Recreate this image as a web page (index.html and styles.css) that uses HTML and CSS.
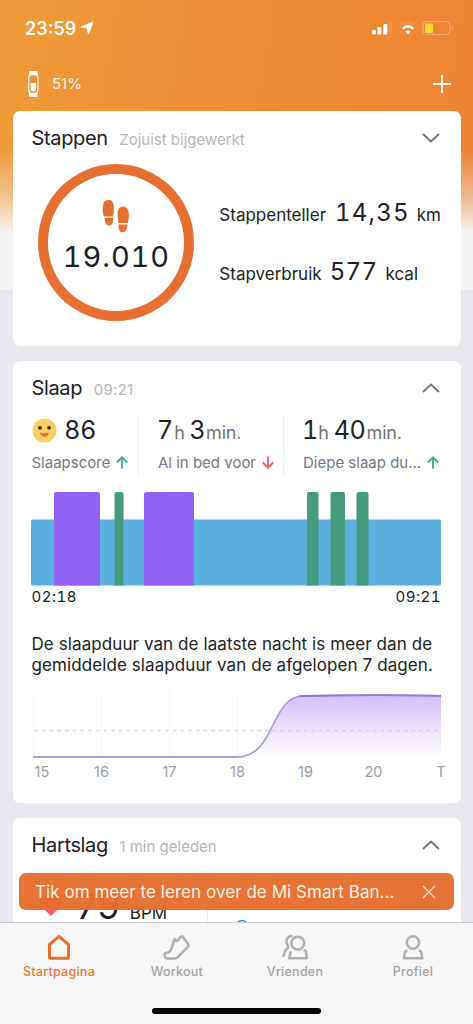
FILE: index.html
```html
<!DOCTYPE html>
<html lang="nl">
<head>
<meta charset="utf-8">
<meta name="viewport" content="width=device-width, initial-scale=1">
<title>Startpagina</title>
<link rel="stylesheet" href="styles.css">
</head>
<body>
<div class="screen">
  <header class="status">
    <span class="time">23:59</span>
    <svg class="loc" width="14" height="14" viewBox="0 0 14 14"><path d="M13.200.8.800 6l6.200 1 1.400 6.200z" fill="#fff" stroke="#fff" stroke-width=".8" stroke-linejoin="round"/></svg>
    <svg class="signals" width="84" height="16" viewBox="0 0 84 16">
      <g fill="#fff"><rect x="1" y="10" width="4" height="4.500" rx="1.200"/><rect x="6.500" y="7" width="4" height="7.500" rx="1"/><rect x="12.300" y="4" width="4" height="10.500" rx="1"/></g>
      <rect x="17.800" y="2" width="3.500" height="12.500" rx="1" fill="#fff" opacity=".12"/>
      <g fill="none" stroke="#fff"><path d="M29.500 4.700q7.500-5 15 0" stroke-width="2" opacity=".15"/><path d="M31.500 8.700q5.500-4.600 11 0" stroke-width="2.600"/></g>
      <path d="M34.300 11.500q2.700-2.200 5.400 0L37 14.500z" fill="#fff"/>
      <rect x="52" y="1.500" width="27" height="13" rx="3.500" fill="none" stroke="#ffc09a" opacity=".65"/>
      <path d="M81 6q2.200 2 0 4z" fill="#ffc09a"/><rect x="54" y="3.500" width="8" height="9.500" rx="1" fill="#fbd83c"/>
    </svg>
  </header>
  <div class="device">
    <svg width="13" height="26" viewBox="0 0 13 26"><path d="M2 0h8.500v3.500l1 3v13l-1 3V26H2v-3.500l-1-3v-13l1-3z" fill="#fff"/><rect x="2.200" y="4" width="8.200" height="18" rx="4.100" fill="#ed9137"/><path d="M3.600 12h5.400v5.500q0 3-2.700 3t-2.700-3z" fill="#fff"/></svg>
    <span class="pct">51%</span>
    <svg class="plus" width="18" height="18" viewBox="0 0 18 18"><path d="M9 0v18M0 9h18" stroke="#fff" stroke-width="1.800"/></svg>
  </div>
  <main class="cards">
    <section class="card steps">
      <div class="head"><h2>Stappen</h2><span class="sub">Zojuist bijgewerkt</span><svg class="chev" width="18" height="10" viewBox="0 0 18 10"><path d="m1 1 8 7.500L17 1"/></svg></div>
      <div class="steps-body">
        <div class="ring">
          <svg width="28" height="34" viewBox="0 0 28 34" fill="#e67032"><path d="M1.700 17.400C.5 12.500 0 7.500 2 3.600 3.600.2 8.500-.3 10.600 3c2 3.500 1.400 9 .6 14.400zM2.500 18.800h8.700c.2 3.300-.4 7.200-3.600 7.800-3.700.4-4.700-3.700-5.100-7.800z"/><path d="M16.600 24c-1-5.500-1.800-10.700.2-14.200 2-3.300 7-3 8.800.2 2 4 1.500 9 .3 14zM16.500 25.400h8.900c-.3 4-1.500 8.200-5.200 7.900-3.200-.3-3.900-4.500-3.700-7.900z"/></svg>
          <span class="count">19.010</span>
        </div>
        <div class="facts">
          <p><span>Stappenteller</span><b class="dist">14,35</b><span>km</span></p>
          <p><span>Stapverbruik</span><b class="kcal">577</b><span>kcal</span></p>
        </div>
      </div>
    </section>
    <section class="card sleep">
      <div class="head"><h2>Slaap</h2><span class="sub stamp">09:21</span><svg class="chev" width="18" height="10" viewBox="0 0 18 10"><path d="m1 9 8-7.500L17 9"/></svg></div>
      <div class="metrics">
        <div class="metric">
          <div class="value"><svg class="face" width="25" height="25" viewBox="0 0 25 25"><circle cx="12.500" cy="12.500" r="12" fill="#f8cf62"/><circle cx="8" cy="9.800" r="1.900" fill="#402b1b"/><circle cx="17" cy="9.800" r="1.900" fill="#402b1b"/><path d="M8 14.700q4.500 1.300 9 0-.7 3.700-4.500 3.700T8 14.700z" fill="#ed604b"/></svg><b class="score">86</b></div>
          <div class="label"><span>Slaapscore</span><svg class="up" width="12" height="13" viewBox="0 0 12 13"><path d="M6 12.500V1.500M.8 6.500 6 1.300l5.200 5.200"/></svg></div>
        </div>
        <div class="metric">
          <div class="value"><b>7</b><i>h</i><b class="next">3</b><i class="min">min.</i></div>
          <div class="label"><span>Al in bed voor</span><svg class="down" width="12" height="13" viewBox="0 0 12 13"><path d="M6 .5v11M.8 6.500 6 11.700l5.200-5.200"/></svg></div>
        </div>
        <div class="metric">
          <div class="value"><b class="one">1</b><i>h</i><b class="next">40</b><i class="min">min.</i></div>
          <div class="label"><span>Diepe slaap du...</span><svg class="up" width="12" height="13" viewBox="0 0 12 13"><path d="M6 12.500V1.500M.8 6.500 6 1.300l5.200 5.200"/></svg></div>
        </div>
      </div>
      <svg class="phases" width="410" height="94" viewBox="0 0 410 94">
        <rect y="27.500" width="410" height="66" rx="1.500" fill="#5bafdf"/>
        <g fill="#8f62f3"><path d="M23 93.500V2q0-2 2-2h42q2 0 2 2v91.500zM113 93.500V2q0-2 2-2h46q2 0 2 2v91.500z"/></g>
        <path d="M83.500 93.500V2q0-2 2-2h5q2 0 2 2v91.500zM276 93.500V2q0-2 2-2h7.500q2 0 2 2v91.500zM299.500 93.500V2q0-2 2-2h10.500q2 0 2 2v91.500zM325.500 93.500V2q0-2 2-2h8q2 0 2 2v91.500z" fill="#459b7e"/>
      </svg>
      <div class="range"><span>02:18</span><span>09:21</span></div>
      <p class="note">De slaapduur van de laatste nacht is meer dan de<br>gemiddelde slaapduur van de afgelopen 7 dagen.</p>
      <svg class="trend" width="410" height="70" viewBox="0 0 410 70">
        <defs><linearGradient id="fade" x1="0" y1="0" x2="0" y2="1"><stop offset="0" stop-color="#cfb7fb"/><stop offset="1" stop-color="#fff"/></linearGradient></defs>
        <path d="M3 0v66M70.500 0v66M138.500 0v66M206.500 0v66M274 0v66M342 0v66M409.500 0v66" stroke="#f7f7f9"/>
        <path d="M206 67C245 67 239 6.500 272 6q70-1.500 138-.2V67z" fill="url(#fade)" opacity=".9"/>
        <path d="M3 40.700h407" stroke="#cac8d0" stroke-dasharray="4 3.700"/>
        <path d="M2 67h204C245 67 239 6.500 272 6q70-1.500 138-.2" fill="none" stroke="#ae9be8" stroke-width="1.800"/>
        <path d="M268 6.200 272 6q70-1.500 138-.2" fill="none" stroke="#9479db" stroke-width="1.800"/>
      </svg>
      <div class="axis"><span>15</span><span>16</span><span>17</span><span>18</span><span>19</span><span>20</span><span>T</span></div>
    </section>
    <section class="card heart">
      <div class="head"><h2>Hartslag</h2><span class="sub">1 min geleden</span><svg class="chev" width="18" height="10" viewBox="0 0 18 10"><path d="m1 9 8-7.500L17 9"/></svg></div>
      <div class="pulse">
        <svg width="24" height="22" viewBox="0 0 24 22"><path d="M12 21 2 11Q-2 2 5 0q5-1 7 4 2-5 7-4 7 2 3 11z" fill="#ed5d6f"/></svg>
        <b>79</b><span>BPM</span>
        <div class="rest"><svg width="14" height="14" viewBox="0 0 14 14"><circle cx="7" cy="7" r="5.500" fill="none" stroke="#438bc4" stroke-width="1.500"/></svg><span>rust</span></div>
      </div>
    </section>
  </main>
  <div class="toast"><span>Tik om meer te leren over de Mi Smart Ban...</span><svg width="14" height="14" viewBox="0 0 14 14"><path d="m1 1 12 12M13 1 1 13" stroke="#ffe3d2" stroke-width="1.200"/></svg></div>
  <nav class="tabs">
    <div class="tab active"><svg width="28" height="28" viewBox="0 0 28 28"><path d="M4.500 11.500 14 3.300l9.500 8.200v12.700q0 1-1 1h-17q-1 0-1-1z"/></svg><span>Startpagina</span></div>
    <div class="tab"><svg width="28" height="28" viewBox="0 0 28 28"><path d="M11.500 6 14 8q2-.6 2.300-2.800l2.200-1.800q.7-.5 1.300.2l5.700 8.200q.5.800-.1 1.500L14.600 24.400q-1 1-2.500 1H4q-2.500-.3-2.500-3.300 0-1.800 1.400-2 4.400-.6 5.800-5.300z"/></svg><span>Workout</span></div>
    <div class="tab"><svg width="28" height="28" viewBox="0 0 28 28"><circle cx="16.800" cy="10.200" r="6.400"/><path d="M11.500 3Q8 2.700 6.200 5.500 4.500 9 6.500 12l.8 2.500q-4.300 3.500-4.800 9.500M9.800 18.200 8.200 25.200h17.600l-1-7-2.300-1.500"/></svg><span>Vrienden</span></div>
    <div class="tab"><svg width="28" height="28" viewBox="0 0 28 28"><circle cx="14" cy="9.500" r="6.200"/><path d="m8.200 17-2.300 2-.9 6.200H23.200l-1-6.200-2.300-2"/></svg><span>Profiel</span></div>
    <div class="home"></div>
  </nav>
</div>
</body>
</html>
```
FILE: styles.css
```css
* { box-sizing: border-box; }
body { margin: 0; font-family: Inter, "Noto Sans", sans-serif; color: #202124; }
h2, p { margin: 0; font-weight: 400; }
b, i { font-weight: 400; font-style: normal; }
svg { display: block; flex: none; }
.screen {
  position: relative; width: 473px; height: 1024px; overflow: hidden;
  display: flex; flex-direction: column; white-space: nowrap;
  background:
    linear-gradient(180deg, rgba(245,245,247,0) 150px, rgba(245,245,247,.45) 195px, #f5f5f7 235px, #f5f5f7 290px, #e7e8eb 290px),
    linear-gradient(100deg, #ef9b38 0, #ed8f37 35%, #ed8735 65%, #eb7d32 100%);
}
.status { height: 56px; padding: 0 18px 0 25px; display: flex; align-items: center; color: #fff; }
.time { font-size: 18px; font-weight: 600; }
.loc { margin-left: 4px; }
.signals { margin-left: auto; }
.device { height: 55px; padding: 0 22px 0 27px; display: flex; align-items: center; color: #fff6eb; }
.pct { margin-left: 12px; font-size: 15px; }
.plus { margin-left: auto; }
.cards { padding: 0 12.500px; display: flex; flex-direction: column; gap: 15px; }
.card { background: #fff; border-radius: 7px; padding: 0 19.500px 0 19px; flex: none; }
.steps { height: 235px; }
.sleep { height: 442px; }
.heart { height: 150px; }
.head { height: 53px; display: flex; align-items: baseline; line-height: 54px; }
.head h2 { font-size: 20px; letter-spacing: -.35px; }
.sub { margin-left: 11.500px; font-size: 15px; color: #b7b7b9; }
.stamp { letter-spacing: .3px; }
.chev { margin-left: auto; margin-top: 1px; margin-right: 1px; align-self: center; }
.chev path { fill: none; stroke: #717173; stroke-width: 1.800; }
.steps-body { display: flex; padding-left: 6px; }
.ring { width: 157px; height: 157px; border: 10px solid #e67032; border-radius: 50%; display: flex; flex-direction: column; align-items: center; padding-top: 25px; }
.ring svg { margin-left: 1px; }
.count { font-size: 29px; line-height: 40px; margin-top: 4px; padding-left: 1px; font-feature-settings: "tnum"; letter-spacing: .9px; }
.facts { margin-left: 25px; padding-top: 31px; }
.facts p { height: 59px; line-height: 36px; font-size: 17px; display: flex; align-items: baseline; }
.facts b { font-size: 24px; font-feature-settings: "tnum"; }
.dist { margin: 0 7px 0 9px; letter-spacing: 1.200px; }
.kcal { margin: 0 8px; letter-spacing: .4px; }
.metrics { height: 62px; display: flex; }
.metric { width: 145px; padding-left: 19px; border-left: 1px solid #efeff1; }
.metric:first-child { width: 106.500px; padding: 0; border: 0; }
.metric:last-child { flex: 1; }
.value { height: 33px; line-height: 33px; display: flex; align-items: baseline; }
.value b { font-size: 25px; }
.value .score { letter-spacing: .6px; }
.value .one { font-feature-settings: "tnum"; margin-left: -1px; margin-right: -2px; }
.value i { font-size: 18px; color: #727275; margin-left: 2px; letter-spacing: -.2px; }
.value .next { margin-left: 5px; }
.value .min { margin-left: 1px; }
.face { align-self: center; margin-right: 8px; }
.label { height: 30px; display: flex; align-items: center; font-size: 15px; color: #77777a; }
.label svg { margin-left: 6px; fill: none; stroke-width: 1.800; }
.up { stroke: #41a883; }
.down { stroke: #e85c6b; }
.phases { margin-top: 16px; margin-left: -.5px; }
.range { height: 22px; line-height: 22px; display: flex; justify-content: space-between; font-size: 15px; font-feature-settings: "tnum"; letter-spacing: .5px; }
.note { margin-top: 26px; font-size: 17px; line-height: 21px; letter-spacing: .09px; }
.trend { margin-top: 14px; margin-left: -.5px; }
.axis { width: 416px; margin-left: 3px; height: 24px; line-height: 24px; display: grid; grid-template-columns: 33px repeat(5, 68px) 38px; text-align: center; font-size: 14.500px; color: #9c9c9f; }
.axis span:first-child { text-align: left; }
.axis span:last-child { text-align: right; }
.pulse { display: flex; align-items: baseline; height: 60px; line-height: 70px; }
.pulse > svg { margin-left: 7px; align-self: flex-start; margin-top: 24px; }
.pulse b { font-size: 36px; margin-left: 14px; letter-spacing: 1px; }
.pulse > span { font-size: 17px; margin-left: 9px; }
.rest { margin-left: 40px; padding: 48px 0 0 27px; border-left: 1px solid #ececef; align-self: flex-start; display: flex; gap: 3px; line-height: 18px; font-size: 15px; }
.toast { position: absolute; left: 19px; top: 873px; width: 435px; height: 37px; border-radius: 7px; background: rgba(229,110,46,.96); color: #fff1e2; display: flex; align-items: center; justify-content: space-between; padding: 0 18px 0 16px; font-size: 17px; letter-spacing: .05px; }
.tabs { position: absolute; left: 0; bottom: 0; width: 473px; height: 102px; background: #f6f6f7; border-top: 1px solid #c9c9cd; display: grid; grid-template-columns: repeat(4, 118px); grid-template-rows: 84.500px 6px; color: #a2a2a4; }
.tab { display: flex; flex-direction: column; align-items: center; padding-top: 10px; font-size: 12.500px; font-weight: 500; line-height: 22px; letter-spacing: .25px; }
.tab svg { fill: none; stroke: #b0b0b2; stroke-width: 2.500; stroke-linejoin: round; }
.tab.active { color: #e77838; }
.tab.active svg { stroke: #e76f30; stroke-width: 3; }
.home { grid-column: 1 / -1; justify-self: center; width: 169px; height: 6px; border-radius: 3px; background: #000; }
```
